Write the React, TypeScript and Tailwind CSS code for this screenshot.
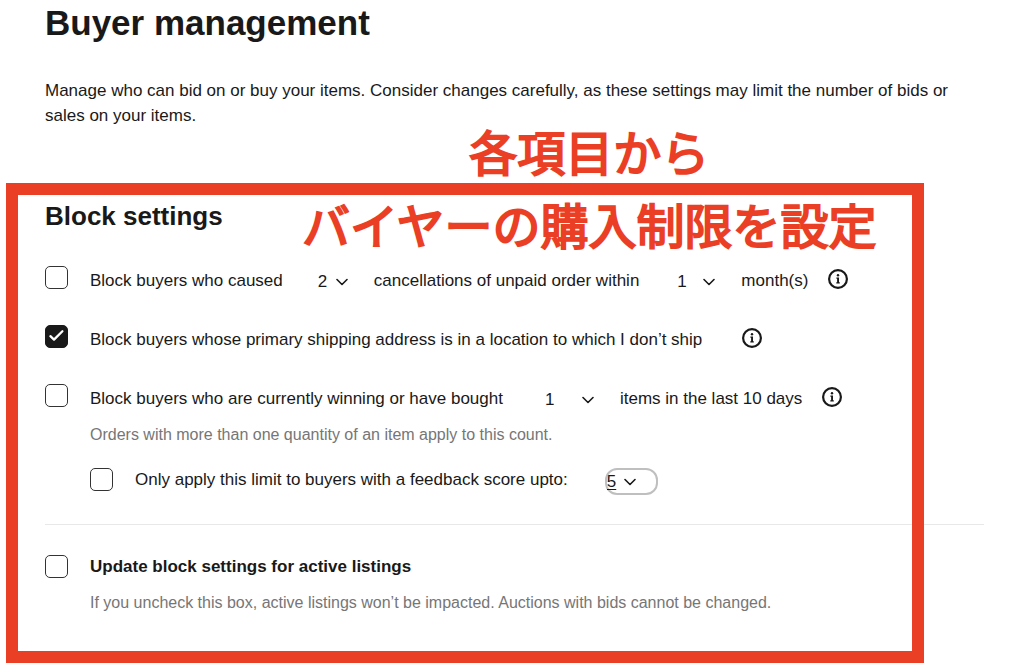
import { useState } from "react";
import type { ReactNode } from "react";

function Checkbox({ id, defaultChecked = false }: { id: string; defaultChecked?: boolean }) {
  const [checked, setChecked] = useState(defaultChecked);
  return (
    <span className="grid size-[23px] shrink-0">
      <input
        id={id}
        type="checkbox"
        checked={checked}
        onChange={(e) => setChecked(e.target.checked)}
        className="col-start-1 row-start-1 size-[23px] appearance-none rounded-[5px] border border-[#333] bg-white checked:border-[#191919] checked:bg-[#191919]"
      />
      {checked && (
        <svg viewBox="0 0 23 23" className="pointer-events-none col-start-1 row-start-1 size-[23px]" aria-hidden="true">
          <path d="M5.4 11.2 9 14.6 17.4 6.2" fill="none" stroke="#fff" strokeWidth="2.3" strokeLinecap="round" strokeLinejoin="round" />
        </svg>
      )}
    </span>
  );
}

function Chevron() {
  return (
    <svg viewBox="0 0 12 8" className="pointer-events-none col-start-1 row-start-1 h-2 w-3 self-center justify-self-end" aria-hidden="true">
      <path d="M1 1.5 6 6.5 11 1.5" fill="none" stroke="#191919" strokeWidth="1.6" strokeLinecap="round" strokeLinejoin="round" />
    </svg>
  );
}

function PlainSelect({ label, value, options, className }: { label: string; value: string; options: string[]; className: string }) {
  return (
    <span className={`mr-[26px] grid h-6 shrink-0 ${className}`}>
      <select
        aria-label={label}
        defaultValue={value}
        className="col-start-1 row-start-1 h-[26px] w-full appearance-none bg-transparent leading-[26px]"
      >
        {options.map((o) => (
          <option key={o}>{o}</option>
        ))}
      </select>
      <Chevron />
    </span>
  );
}

function InfoButton({ className = "ml-5" }: { className?: string }) {
  return (
    <button type="button" aria-label="More information" className={`size-5 shrink-0 ${className}`}>
      <svg viewBox="0 0 20 20" className="size-5" aria-hidden="true">
        <circle cx="10" cy="10" r="8.9" fill="none" stroke="#191919" strokeWidth="2.2" />
        <circle cx="10" cy="6.2" r="1.2" fill="#191919" />
        <path d="M8.4 8.6h2.6v4.6h.8v1.2H8.3v-1.2h.8V9.8h-.7z" fill="#191919" />
      </svg>
    </button>
  );
}

function Row({ id, checked, children }: { id: string; checked?: boolean; children: ReactNode }) {
  return (
    <div className="flex items-start gap-[22px]">
      <Checkbox id={id} defaultChecked={checked} />
      <div className="min-w-0 flex-1 pt-[3px]">{children}</div>
    </div>
  );
}

export default function App() {
  return (
    <main className="overflow-x-hidden bg-white pt-[3px] pr-10 pb-14 pl-[45px] font-['Liberation_Sans',Arial,sans-serif] text-[17px] leading-6 text-[#191919]">
      <h1 className="text-[35px] leading-10 font-bold">Buyer management</h1>
      <p className="mt-[35px] leading-[25px]">
        Manage who can bid on or buy your items. Consider changes carefully, as these settings may limit the number of bids or
        sales on your items.
      </p>

      <section className="relative mt-[72px]">
        <h2 className="text-[26px] leading-8 font-bold">Block settings</h2>

        <div className="mt-[34px] flex flex-col gap-8">
          <Row id="unpaid">
            <div className="flex items-start">
              <label htmlFor="unpaid">Block buyers who caused</label>
              <PlainSelect label="Number of cancellations" value="2" options={["2", "3", "4", "5"]} className="ml-[35px] w-[30px]" />
              <span>cancellations of unpaid order within</span>
              <PlainSelect label="Number of months" value="1" options={["1", "6", "12"]} className="ml-[38px] w-[38px]" />
              <span>month(s)</span>
              <InfoButton />
            </div>
          </Row>

          <Row id="location" checked>
            <div className="flex items-start">
              <label htmlFor="location">Block buyers whose primary shipping address is in a location to which I don’t ship</label>
              <InfoButton className="ml-10" />
            </div>
          </Row>

          <Row id="winning">
            <div className="flex items-start">
              <label htmlFor="winning">Block buyers who are currently winning or have bought</label>
              <PlainSelect label="Number of items" value="1" options={["1", "5", "10", "25"]} className="ml-[42px] w-[49px]" />
              <span>items in the last 10 days</span>
              <InfoButton />
            </div>
            <p className="mt-3 text-base leading-6 text-[#767676]">Orders with more than one quantity of an item apply to this count.</p>
            <div className="mt-[21px] flex items-start">
              <Checkbox id="feedback" />
              <label htmlFor="feedback" className="ml-[22px]">
                Only apply this limit to buyers with a feedback score upto:
              </label>
              <span className="ml-[37px] grid h-[27px] w-[53px] shrink-0 rounded-xl border-2 border-[#bfbfbf]">
                <select
                  aria-label="Feedback score"
                  defaultValue="5"
                  className="col-start-1 row-start-1 h-[23px] w-full appearance-none bg-transparent leading-[23px] underline underline-offset-2 outline-none"
                >
                  {["5", "4", "3", "2", "1", "0"].map((o) => (
                    <option key={o}>{o}</option>
                  ))}
                </select>
                <span className="pointer-events-none col-start-1 row-start-1 mr-5 grid">
                  <Chevron />
                </span>
              </span>
            </div>
          </Row>
        </div>

        <hr className="mt-[29px] mb-[30px] border-[#e8e8e8]" />

        <div className="flex items-start gap-[22px]">
          <Checkbox id="update" />
          <div className="min-w-0 flex-1">
            <label htmlFor="update" className="block font-bold">
              Update block settings for active listings
            </label>
            <p className="mt-3 text-base leading-6 text-[#767676]">
              If you uncheck this box, active listings won’t be impacted. Auctions with bids cannot be changed.
            </p>
          </div>
        </div>

        <div className="pointer-events-none absolute -top-[17px] right-[60px] -bottom-12 -left-[39px] border-12 border-[#eb3f25]" />
        <p className="pointer-events-none absolute -top-[86px] left-[257px] text-center font-['Noto_Sans_CJK_JP',sans-serif] text-5xl leading-[73px] font-normal whitespace-nowrap text-[#eb3f25] [-webkit-text-stroke:2px_#eb3f25]">
          各項目から
          <br />
          バイヤーの購入制限を設定
        </p>
      </section>
    </main>
  );
}
